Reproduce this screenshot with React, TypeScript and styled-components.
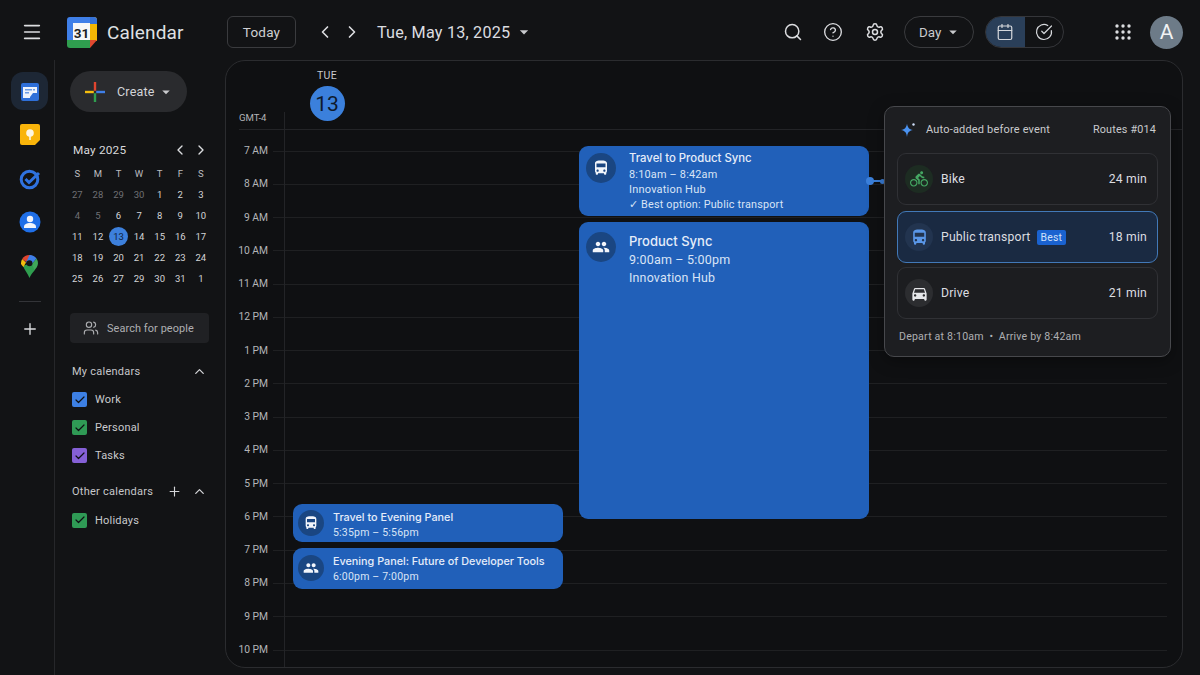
import React from "react";
import styled, { createGlobalStyle } from "styled-components";
import { Menu, ChevronLeft, ChevronRight, ChevronUp, Search, CircleHelp, Settings, Calendar, CircleCheckBig, Plus, Users, Check } from "lucide-react";
import { MdArrowDropDown, MdDirectionsBus, MdPeople, MdDirectionsBike, MdDirectionsCar } from "react-icons/md";

const Global = createGlobalStyle`
  html, body { margin: 0; padding: 0; background: #121315; }
  body { font-family: "Roboto", "Liberation Sans", sans-serif; color: #e3e3e3; overflow: hidden; }
  * { box-sizing: border-box; }
`;

const Page = styled.div`width:1200px;height:675px;display:flex;flex-direction:column;background:#121315;overflow:hidden;`;
const Header = styled.header`height:60px;flex:none;display:flex;align-items:center;padding-left:20px;padding-top:4px;`;
const IconSlot = styled.span<{ $ml?: number; $c?: string }>`
  display:inline-flex;align-items:center;justify-content:center;width:24px;height:24px;flex:none;
  margin-left:${p => p.$ml ?? 0}px;color:${p => p.$c ?? "#dcdde0"};
`;
const LogoWrap = styled.span`display:inline-flex;margin-left:23px;flex:none;`;
const Brand = styled.span`font-size:19px;color:#dfe0e3;margin-left:10px;width:120px;letter-spacing:.15px;flex:none;`;
const TodayBtn = styled.div`
  width:69px;height:32px;border:1px solid #3a3b3e;border-radius:6px;display:flex;align-items:center;justify-content:center;
  font-size:13.5px;color:#cfd0d3;flex:none;letter-spacing:.2px;
`;
const DateLabel = styled.span`font-size:16.2px;color:#dcdde0;margin-left:13px;letter-spacing:.2px;flex:none;width:134px;white-space:nowrap;`;
const Caret = styled.span<{ $ml?: number }>`display:inline-flex;color:#c9cacd;margin-left:${p => p.$ml ?? 0}px;flex:none;`;
const Push = styled.div`flex:1;`;
const DayPill = styled.div`
  width:70px;height:32px;border:1px solid #3a3b3e;border-radius:16px;display:flex;align-items:center;padding-left:14px;
  font-size:13.4px;color:#c9cacd;margin-left:17px;flex:none;gap:3px;
`;
const Toggle = styled.div`display:flex;width:79px;height:32px;margin-left:11px;border:1px solid #35363a;border-radius:16px;overflow:hidden;flex:none;`;
const ToggleSeg = styled.div<{ $on?: boolean }>`
  flex:1;display:flex;align-items:center;justify-content:center;background:${p => (p.$on ? "#2a3f59" : "transparent")};color:#d6d8dc;
`;
const Avatar = styled.div`
  width:33px;height:33px;border-radius:50%;background:#6d7b88;color:#f1f2f4;font-size:21px;display:flex;align-items:center;justify-content:center;
  margin-left:15px;margin-right:17px;flex:none;
`;

const Body = styled.div`flex:1;display:flex;min-height:0;`;
const Rail = styled.nav`width:55px;flex:none;border-right:1px solid #26272a;display:flex;flex-direction:column;align-items:center;padding-top:12px;padding-left:5px;`;
const RailItem = styled.div<{ $on?: boolean }>`
  width:37px;height:38px;border-radius:12px;background:${p => (p.$on ? "#1d2735" : "transparent")};display:flex;align-items:center;justify-content:center;margin-bottom:5.75px;flex:none;
`;
const RailRule = styled.div`width:22px;height:1px;background:#333438;margin:10px 0 15px;`;
const Side = styled.aside`width:170px;flex:none;padding:11px 16px 0 15px;`;
const CreateBtn = styled.div`
  width:117px;height:41px;border-radius:21px;background:#2a2b2e;display:flex;align-items:center;padding-left:15px;font-size:12.5px;color:#d4d5d8;
`;
const CreateText = styled.span`margin-left:12px;margin-right:2px;letter-spacing:.2px;`;
const MonthHead = styled.div`display:flex;align-items:center;margin:29px 0 0 3px;height:18px;font-size:11.8px;color:#d8d9dc;letter-spacing:.2px;`;
const MonthNav = styled.div`margin-left:auto;display:flex;gap:5px;color:#dcdde0;margin-right:0;`;
const MiniGrid = styled.div`display:grid;grid-template-columns:repeat(7,20.6px);grid-auto-rows:21px;margin:4px 0 0 -3px;font-size:9.5px;`;
const MiniCell = styled.div<{ $kind?: "head" | "mute" | "today" }>`
  display:flex;align-items:center;justify-content:center;position:relative;
  color:${p => (p.$kind === "mute" ? "#6f7074" : p.$kind === "today" ? "#0e2240" : p.$kind === "head" ? "#bcbdc0" : "#d4d5d8")};
  ${p => (p.$kind === "today" ? "&::before{content:'';position:absolute;width:19px;height:19px;border-radius:50%;background:#3d80dc;z-index:0;}" : "")}
`;
const MiniText = styled.span`position:relative;`;
const PeopleBox = styled.div`
  width:139px;height:30px;margin-top:24px;background:#202124;border-radius:4px;display:flex;align-items:center;padding-left:13px;font-size:10.9px;color:#aeafb2;gap:8px;letter-spacing:.1px;white-space:nowrap;
`;
const SectionHead = styled.div<{ $mt: number }>`display:flex;align-items:center;height:18px;margin:${p => p.$mt}px 0 5.5px 2px;font-size:11px;color:#c6c7ca;letter-spacing:.25px;`;
const SectionTools = styled.span`margin-left:auto;display:flex;align-items:center;gap:10px;color:#d4d5d8;margin-right:2px;`;
const CalRow = styled.div`display:flex;align-items:center;height:28px;margin-left:2px;gap:8px;font-size:11px;color:#c9cacd;letter-spacing:.2px;`;
const Tick = styled.span<{ $c: string }>`width:15px;height:15px;border-radius:2px;background:${p => p.$c};display:inline-flex;align-items:center;justify-content:center;color:#0d1014;flex:none;`;

const Panel = styled.main`
  width:958px;height:608px;flex:none;border:1px solid #2b2c2f;border-radius:20px;background:#0f1012;position:relative;overflow:hidden;
`;
const DayHead = styled.div`height:51px;width:202px;display:flex;flex-direction:column;align-items:center;padding-top:8px;`;
const DayName = styled.div`font-size:10.5px;color:#c9cacd;letter-spacing:.3px;height:13px;line-height:13px;`;
const DayNum = styled.div`
  width:35px;height:35px;border-radius:50%;background:#3b80dc;color:#0e1a2c;font-size:21px;display:flex;align-items:center;justify-content:center;margin-top:4px;flex:none;position:relative;z-index:1;
`;
const Timeline = styled.div`position:relative;height:556px;&::before{content:'';position:absolute;left:58px;top:0;bottom:0;width:1px;background:#232427;}`;
const GmtRow = styled.div`height:22.4px;`;
const GmtLabel = styled.div`height:18px;margin-left:13px;border-bottom:1px solid #232427;font-size:9.6px;color:#b4b5b8;line-height:11px;`;
const HourRow = styled.div`height:33.27px;display:flex;align-items:center;`;
const HourLabel = styled.div`width:42px;padding-bottom:1px;text-align:right;font-size:10.3px;color:#b4b5b8;flex:none;`;
const HourLine = styled.div`flex:1;height:1px;margin-left:5px;margin-right:15px;background:#1f2022;`;

const Event = styled.article<{ $x: number; $y: number; $w: number; $h: number }>`
  position:absolute;left:${p => p.$x}px;top:${p => p.$y}px;width:${p => p.$w}px;height:${p => p.$h}px;
  background:#2160b9;border-radius:9px;display:flex;color:#e8eefa;
`;
const EvIcon = styled.div<{ $d: number; $l: number; $t: number }>`
  width:${p => p.$d}px;height:${p => p.$d}px;border-radius:50%;background:#1a4682;margin:${p => p.$t}px 0 0 ${p => p.$l}px;display:flex;align-items:center;justify-content:center;color:#f2f5fb;flex:none;
`;
const EvText = styled.div<{ $l: number; $t: number }>`margin:${p => p.$t}px 0 0 ${p => p.$l}px;`;
const EvTitle = styled.div<{ $s: number; $lh: number }>`font-family:"Inter","Roboto",sans-serif;font-size:${p => p.$s}px;line-height:${p => p.$lh}px;font-weight:500;color:#e6edf9;white-space:nowrap;`;
const EvLine = styled.div<{ $s: number; $lh: number }>`font-size:${p => p.$s}px;line-height:${p => p.$lh}px;color:#d9e4f6;letter-spacing:.2px;white-space:nowrap;`;

const Connector = styled.div`
  position:absolute;left:643px;top:68px;width:15px;height:2px;background:#3b80dc;
  &::before{content:'';position:absolute;left:-3px;top:-3px;width:8px;height:8px;border-radius:50%;background:#3b80dc;}
  &::after{content:'';position:absolute;right:-1px;top:-1.5px;width:5px;height:5px;border-radius:50%;background:#3b80dc;}
`;
const Pop = styled.section`
  position:absolute;left:658px;top:-6px;width:287px;height:251px;border:1px solid #47484c;border-radius:10px;background:#1d1e21;padding:0 12px;
  box-shadow:0 4px 16px rgba(0,0,0,.35);
`;
const PopHead = styled.div`height:46px;display:flex;align-items:center;font-size:11px;color:#c9cacd;padding:0 2px 1px 3px;letter-spacing:.18px;`;
const PopTitle = styled.span`margin-left:10px;`;
const PopRoute = styled.span`margin-left:auto;font-size:10.8px;`;
const Route = styled.div<{ $on?: boolean; $mt: number }>`
  height:52px;margin-top:${p => p.$mt}px;border-radius:9px;display:flex;align-items:center;padding:0 10px 0 7px;font-size:12.2px;
  color:#dcdde0;letter-spacing:.2px;
  border:1px solid ${p => (p.$on ? "#4279b8" : "#303135")};
  background:${p => (p.$on ? "#1a2a42" : "#1c1d20")};
`;
const RouteIcon = styled.div<{ $bg: string; $c: string }>`
  width:28px;height:28px;border-radius:50%;background:${p => p.$bg};color:${p => p.$c};display:flex;align-items:center;justify-content:center;margin-right:8px;flex:none;
`;
const BestTag = styled.span`margin-left:6px;background:#1a62d0;border-radius:2px;color:#cfe0fa;font-size:10.4px;padding:1px 4px;line-height:13px;`;
const RouteMin = styled.span`margin-left:auto;`;
const PopFoot = styled.div`margin-top:11px;padding-left:2px;font-size:10.6px;color:#aeafb2;letter-spacing:.2px;white-space:pre;`;

const GLogo = () => (
  <svg width="30" height="31" viewBox="0 0 30 31">
    <path d="M3 0h21v7H7v17H0V3a3 3 0 0 1 3-3z" fill="#3f7fe8" />
    <rect x="6" y="6" width="18" height="18" fill="#f6f7f8" />
    <path d="M23 0h4a3 3 0 0 1 3 3v21h-7z" fill="#f2b705" />
    <path d="M23 0h4a3 3 0 0 1 3 3v4h-7z" fill="#3572d8" />
    <path d="M0 23h23v8H3a3 3 0 0 1-3-3z" fill="#2f9e4f" />
    <path d="M23 31v-8h7z" fill="#e0492f" />
    <text x="14.5" y="20.5" fontSize="13.5" fontWeight="700" fill="#1d1e21" textAnchor="middle" fontFamily="Roboto, sans-serif">31</text>
  </svg>
);
const RailCal = () => (
  <svg width="20" height="21" viewBox="0 0 20 21">
    <rect x="1" y="2" width="18" height="18" rx="2" fill="#2e6fd8" />
    <rect x="3" y="6" width="14" height="11" fill="#eef3fb" />
    <path d="M5 8h7v1.500H5zM5 11h4v1.500H5zM13 8h2v1.500h-2z" fill="#6b9be6" />
    <path d="M10 16l3-4h4v5h-7z" fill="#2e6fd8" />
  </svg>
);
const RailKeep = () => (
  <svg width="20" height="21" viewBox="0 0 20 21">
    <path d="M2 0h16a2 2 0 0 1 2 2v14l-5 5H2a2 2 0 0 1-2-2V2a2 2 0 0 1 2-2z" fill="#f9b40a" />
    <circle cx="10" cy="9" r="3.800" fill="#fdf6e3" />
    <rect x="9.200" y="12" width="1.600" height="4" fill="#fdf6e3" />
  </svg>
);
const RailTasks = () => (
  <svg width="22" height="22" viewBox="0 0 22 22">
    <circle cx="10.500" cy="11.500" r="8.300" fill="none" stroke="#2f72e0" strokeWidth="3" />
    <path d="M6.500 11l3.500 3.500L20 5" fill="none" stroke="#2f72e0" strokeWidth="3" />
  </svg>
);
const RailContact = () => (
  <svg width="22" height="22" viewBox="0 0 22 22">
    <circle cx="11" cy="11" r="10.500" fill="#1f6fe8" />
    <circle cx="11" cy="8" r="3.200" fill="#f2f5fb" />
    <path d="M5 16c0-3 3-4 6-4s6 1 6 4v1H5z" fill="#f2f5fb" />
  </svg>
);
const RailMaps = () => (
  <svg width="17" height="23" viewBox="0 0 17 23">
    <path d="M2 11l10-4 1.500 8.500c-2 2.500-4 4.500-5 7.500C6.500 18.500 4 15.500 2 11z" fill="#2f9e4f" />
    <path d="M1.200 4L5 7.500 2.500 12C1 10.500 0 9.500 0 8.200 0 6.600.4 5.200 1.200 4z" fill="#f5bd0e" />
    <path d="M1.200 4A8.500 8.500 0 0 1 8.500 0l2 .3L5 7z" fill="#e0452f" />
    <path d="M8.500 0A8.500 8.500 0 0 1 15.500 3.500L11 9 5 7.500z" fill="#3f7fe8" />
    <path d="M15.500 3.500A8.500 8.500 0 0 1 17 8.200c0 3-2 5-3.500 7.300L11 9z" fill="#3fa85a" />
    <circle cx="8.500" cy="8.200" r="3" fill="#14161a" />
  </svg>
);
const GPlus = () => (
  <svg width="20" height="20" viewBox="0 0 20 20">
    <path d="M8.800 0h2.400v8.800H8.800z" fill="#e0452f" />
    <path d="M11.200 8.800H20v2.400h-8.800z" fill="#3f7fe8" />
    <path d="M8.800 11.200h2.400V20H8.800z" fill="#2f9e4f" />
    <path d="M0 8.800h8.800v2.400H0z" fill="#f5bd0e" />
  </svg>
);
const AppsIcon = () => (
  <svg width="16" height="16" viewBox="0 0 16 16" fill="#dcdde0">
    {[2, 8, 14].flatMap(y => [2, 8, 14].map(x => <circle key={`${x}-${y}`} cx={x} cy={y} r="1.700" />))}
  </svg>
);
const Sparkle = () => (
  <svg width="16" height="16" viewBox="0 0 16 16">
    <path d="M7 1.500C7.500 5.500 9 7.200 13 8 9 8.800 7.500 10.500 7 15 6.500 10.500 5 8.800 1 8 5 7.200 6.500 5.500 7 1.500z" fill="#4a92f0" />
    <circle cx="13.500" cy="2.500" r="1.200" fill="#cfe0fa" />
  </svg>
);

const heads = ["S", "M", "T", "W", "T", "F", "S"];
const days = "27 28 29 30 1 2 3 4 5 6 7 8 9 10 11 12 13 14 15 16 17 18 19 20 21 22 23 24 25 26 27 29 30 31 1".split(" ");
const hours = ["7 AM", "8 AM", "9 AM", "10 AM", "11 AM", "12 PM", "1 PM", "2 PM", "3 PM", "4 PM", "5 PM", "6 PM", "7 PM", "8 PM", "9 PM", "10 PM"];

const kindOf = (i: number): "mute" | "today" | undefined => (i < 4 || i === 7 || i === 8 ? "mute" : i === 16 ? "today" : undefined);

export default function App() {
  return (
    <Page>
      <Global />
      <Header>
        <IconSlot><Menu size={22} strokeWidth={1.8} /></IconSlot>
        <LogoWrap><GLogo /></LogoWrap>
        <Brand>Calendar</Brand>
        <TodayBtn>Today</TodayBtn>
        <IconSlot $ml={17}><ChevronLeft size={20} strokeWidth={2} /></IconSlot>
        <IconSlot $ml={3}><ChevronRight size={20} strokeWidth={2} /></IconSlot>
        <DateLabel>Tue, May 13, 2025</DateLabel>
        <Caret $ml={3}><MdArrowDropDown size={20} /></Caret>
        <Push />
        <IconSlot><Search size={20} strokeWidth={1.8} /></IconSlot>
        <IconSlot $ml={16}><CircleHelp size={20} strokeWidth={1.6} /></IconSlot>
        <IconSlot $ml={18}><Settings size={20} strokeWidth={1.8} /></IconSlot>
        <DayPill>Day<Caret><MdArrowDropDown size={18} /></Caret></DayPill>
        <Toggle>
          <ToggleSeg $on><Calendar size={18} strokeWidth={1.6} /></ToggleSeg>
          <ToggleSeg><CircleCheckBig size={18} strokeWidth={1.6} /></ToggleSeg>
        </Toggle>
        <IconSlot $ml={47}><AppsIcon /></IconSlot>
        <Avatar>A</Avatar>
      </Header>
      <Body>
        <Rail>
          <RailItem $on><RailCal /></RailItem>
          <RailItem><RailKeep /></RailItem>
          <RailItem><RailTasks /></RailItem>
          <RailItem><RailContact /></RailItem>
          <RailItem><RailMaps /></RailItem>
          <RailRule />
          <IconSlot><Plus size={18} strokeWidth={1.8} /></IconSlot>
        </Rail>
        <Side>
          <CreateBtn><GPlus /><CreateText>Create</CreateText><Caret><MdArrowDropDown size={18} /></Caret></CreateBtn>
          <MonthHead>May 2025
            <MonthNav><ChevronLeft size={16} strokeWidth={2} /><ChevronRight size={16} strokeWidth={2} /></MonthNav>
          </MonthHead>
          <MiniGrid>
            {heads.map((d, i) => <MiniCell key={"h" + i} $kind="head"><MiniText>{d}</MiniText></MiniCell>)}
            {days.map((d, i) => <MiniCell key={i} $kind={kindOf(i)}><MiniText>{d}</MiniText></MiniCell>)}
          </MiniGrid>
          <PeopleBox><Users size={16} strokeWidth={1.7} />Search for people</PeopleBox>
          <SectionHead $mt={19}>My calendars<SectionTools><ChevronUp size={15} strokeWidth={2} /></SectionTools></SectionHead>
          <CalRow><Tick $c="#3d80e4"><Check size={12} strokeWidth={2.4} /></Tick>Work</CalRow>
          <CalRow><Tick $c="#2f9a55"><Check size={12} strokeWidth={2.4} /></Tick>Personal</CalRow>
          <CalRow><Tick $c="#8560d6"><Check size={12} strokeWidth={2.4} /></Tick>Tasks</CalRow>
          <SectionHead $mt={13}>Other calendars<SectionTools><Plus size={15} strokeWidth={1.8} /><ChevronUp size={15} strokeWidth={2} /></SectionTools></SectionHead>
          <CalRow><Tick $c="#2f9a55"><Check size={12} strokeWidth={2.4} /></Tick>Holidays</CalRow>
        </Side>
        <Panel>
          <DayHead><DayName>TUE</DayName><DayNum>13</DayNum></DayHead>
          <Timeline>
            <GmtRow><GmtLabel>GMT-4</GmtLabel></GmtRow>
            {hours.map(h => <HourRow key={h}><HourLabel>{h}</HourLabel><HourLine /></HourRow>)}
            <Event $x={353} $y={34} $w={290} $h={70}>
              <EvIcon $d={30} $l={7} $t={7}><MdDirectionsBus size={18} /></EvIcon>
              <EvText $l={13} $t={4}>
                <EvTitle $s={11.35} $lh={17}>Travel to Product Sync</EvTitle>
                <EvLine $s={10.9} $lh={15}>8:10am – 8:42am</EvLine>
                <EvLine $s={11} $lh={15}>Innovation Hub</EvLine>
                <EvLine $s={10.8} $lh={15}>✓ Best option: Public transport</EvLine>
              </EvText>
            </Event>
            <Event $x={353} $y={110} $w={290} $h={297}>
              <EvIcon $d={30} $l={7} $t={10}><MdPeople size={18} /></EvIcon>
              <EvText $l={13} $t={9}>
                <EvTitle $s={13} $lh={20}>Product Sync</EvTitle>
                <EvLine $s={12.5} $lh={18}>9:00am – 5:00pm</EvLine>
                <EvLine $s={12.4} $lh={17}>Innovation Hub</EvLine>
              </EvText>
            </Event>
            <Event $x={67} $y={392} $w={270} $h={38}>
              <EvIcon $d={26} $l={5} $t={6}><MdDirectionsBus size={16} /></EvIcon>
              <EvText $l={9} $t={6}>
                <EvTitle $s={10.8} $lh={15}>Travel to Evening Panel</EvTitle>
                <EvLine $s={10.5} $lh={15}>5:35pm – 5:56pm</EvLine>
              </EvText>
            </Event>
            <Event $x={67} $y={436} $w={270} $h={41}>
              <EvIcon $d={26} $l={5} $t={7}><MdPeople size={16} /></EvIcon>
              <EvText $l={9} $t={6}>
                <EvTitle $s={10.8} $lh={15}>Evening Panel: Future of Developer Tools</EvTitle>
                <EvLine $s={10.5} $lh={15}>6:00pm – 7:00pm</EvLine>
              </EvText>
            </Event>
            <Connector />
            <Pop>
              <PopHead><Sparkle /><PopTitle>Auto-added before event</PopTitle><PopRoute>Routes #014</PopRoute></PopHead>
              <Route $mt={0}>
                <RouteIcon $bg="#1d2c22" $c="#45a863"><MdDirectionsBike size={18} /></RouteIcon>Bike<RouteMin>24 min</RouteMin>
              </Route>
              <Route $on $mt={6}>
                <RouteIcon $bg="#22344f" $c="#5a97e8"><MdDirectionsBus size={19} /></RouteIcon>Public transport<BestTag>Best</BestTag><RouteMin>18 min</RouteMin>
              </Route>
              <Route $mt={4}>
                <RouteIcon $bg="#2c2d30" $c="#e6e7ea"><MdDirectionsCar size={19} /></RouteIcon>Drive<RouteMin>21 min</RouteMin>
              </Route>
              <PopFoot>Depart at 8:10am  •  Arrive by 8:42am</PopFoot>
            </Pop>
          </Timeline>
        </Panel>
      </Body>
    </Page>
  );
}
